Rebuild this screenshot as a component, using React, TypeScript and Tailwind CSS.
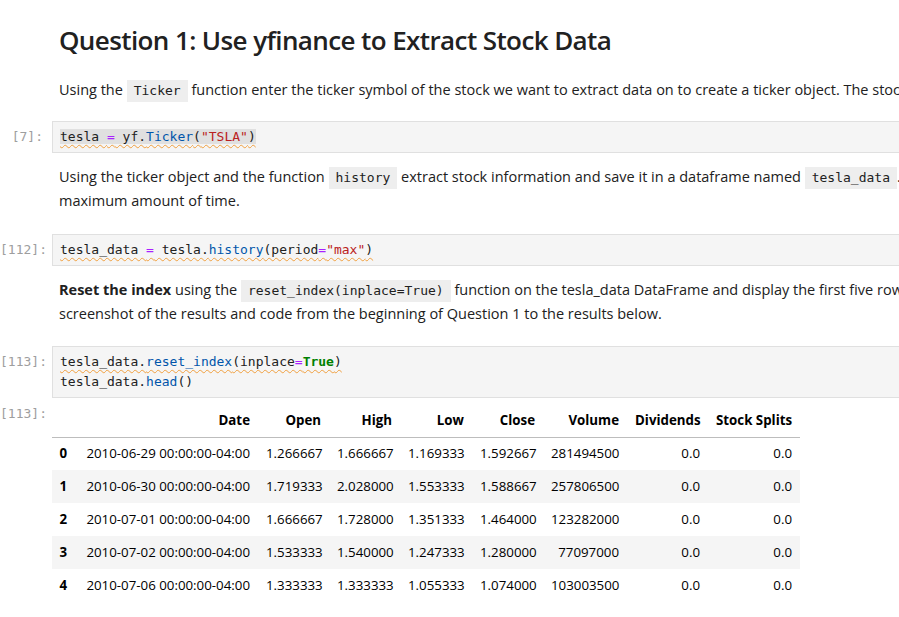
import React from 'react'

const sans = "font-['Segoe_UI','Open_Sans',sans-serif]"
const mono = "font-['DejaVu_Sans_Mono','Liberation_Mono',monospace]"

const ROWS = [
  ['0', '2010-06-29 00:00:00-04:00', '1.266667', '1.666667', '1.169333', '1.592667', '281494500', '0.0', '0.0'],
  ['1', '2010-06-30 00:00:00-04:00', '1.719333', '2.028000', '1.553333', '1.588667', '257806500', '0.0', '0.0'],
  ['2', '2010-07-01 00:00:00-04:00', '1.666667', '1.728000', '1.351333', '1.464000', '123282000', '0.0', '0.0'],
  ['3', '2010-07-02 00:00:00-04:00', '1.533333', '1.540000', '1.247333', '1.280000', '77097000', '0.0', '0.0'],
  ['4', '2010-07-06 00:00:00-04:00', '1.333333', '1.333333', '1.055333', '1.074000', '103003500', '0.0', '0.0'],
]

const HEADERS = ['', 'Date', 'Open', 'High', 'Low', 'Close', 'Volume', 'Dividends', 'Stock Splits']
const WIDTHS = ['w-[23px]', 'w-[183px]', 'w-[71px]', 'w-[71px]', 'w-[72px]', 'w-[71px]', 'w-[84px]', 'w-[81px]', 'w-[92px]']

function Prompt({ n }: { n: string }) {
  return (
    <div className={`w-[52px] shrink-0 pr-[9px] text-right text-[13px] leading-[20px] text-[#9e9e9e] ${mono}`}>
      [{n}]:
    </div>
  )
}

function Code({ children }: { children: React.ReactNode }) {
  return (
    <code
      className={`inline-block bg-[#eeeeee] px-[7px] align-middle text-[13px] leading-[22px] text-[#212121] ${mono}`}
    >
      {children}
    </code>
  )
}

const squiggle = 'underline decoration-wavy decoration-[#f0a040] decoration-1 underline-offset-[3px]'

function CodeCell({ n, children }: { n: string; children: React.ReactNode }) {
  return (
    <div className="flex items-start">
      <div className="pt-[6px]">
        <Prompt n={n} />
      </div>
      <div
        className={`w-[900px] shrink-0 border border-[#e0e0e0] bg-[#f5f5f5] px-[7px] py-[5px] text-[13px] leading-[20px] whitespace-pre text-[#212121] ${mono}`}
      >
        {children}
      </div>
    </div>
  )
}

function Md({ children, pt }: { children: React.ReactNode; pt: string }) {
  return (
    <div className={`flex ${pt}`}>
      <div className="w-[52px] shrink-0" />
      <p className="pl-[7px] text-[14.5px] leading-[24px] whitespace-nowrap">{children}</p>
    </div>
  )
}

export default function App() {
  return (
    <div className={`h-[617px] w-[899px] overflow-hidden bg-white text-[#212121] ${sans}`}>
      <div className="flex w-[1200px] flex-col">
        {/* heading */}
        <div className="flex pt-[23px]">
          <div className="w-[52px] shrink-0" />
          <h1 className="pl-[7px] text-[26px] leading-[34px] font-semibold tracking-[-0.6px] text-[#212121]">
            Question 1: Use yfinance to Extract Stock Data
          </h1>
        </div>

        <Md pt="pt-[21px]">
          Using the <Code>Ticker</Code> function enter the ticker symbol of the stock we want to extract data on to
          create a ticker object. The stock is Tesla and its ticker symbol is TSLA.
        </Md>

        <div className="pt-[19px]">
          <CodeCell n="7">
            <span className={`bg-[#e0e0e0] ${squiggle}`}>
              tesla <span className="text-[#aa22ff]">=</span> yf.<span className="text-[#0055aa]">Ticker</span>(
              <span className="text-[#ba2121]">"TSLA"</span>)
            </span>
          </CodeCell>
        </div>

        <Md pt="pt-[12px]">
          Using the ticker object and the function <Code>history</Code> extract stock information and save it in a
          dataframe named <Code>tesla_data</Code>. Set the <Code>period</Code> parameter to <Code>max</Code> so we get
          information for the
          <br />
          maximum amount of time.
        </Md>

        <div className="pt-[21px]">
          <CodeCell n="112">
            <span className={squiggle}>
              tesla_data <span className="text-[#aa22ff]">=</span> tesla.
              <span className="text-[#0055aa]">history</span>(period<span className="text-[#aa22ff]">=</span>
              <span className="text-[#ba2121]">"max"</span>)
            </span>
          </CodeCell>
        </div>

        <Md pt="pt-[12px]">
          <b className="font-bold">Reset the index</b> using the <Code>reset_index(inplace=True)</Code> function on the
          tesla_data DataFrame and display the first five rows of the tesla_data dataframe using the
          <br />
          screenshot of the results and code from the beginning of Question 1 to the results below.
        </Md>

        <div className="pt-[20px]">
          <CodeCell n="113">
            <span className={squiggle}>
              tesla_data.<span className="text-[#0055aa]">reset_index</span>(inplace
              <span className="text-[#aa22ff]">=</span>
              <span className="font-bold text-[#008000]">True</span>)
            </span>
            {'\n'}tesla_data.<span className="text-[#0055aa]">head</span>()
          </CodeCell>
        </div>

        {/* output */}
        <div className="flex items-start pt-[6px]">
          <Prompt n="113" />
          <table className="w-[748px] table-fixed border-collapse text-[13.3px] text-black">
            <thead>
              <tr className="border-b border-[#bdbdbd]">
                {HEADERS.map((h, i) => (
                  <th
                    key={i}
                    className={`h-[33px] ${WIDTHS[i]} px-[8px] text-right align-middle font-bold whitespace-nowrap`}
                  >
                    {h}
                  </th>
                ))}
              </tr>
            </thead>
            <tbody>
              {ROWS.map((r, i) => (
                <tr key={i} className={i % 2 === 1 ? 'bg-[#f5f5f5]' : ''}>
                  {r.map((c, j) => (
                    <td
                      key={j}
                      className={`h-[33px] px-[8px] text-right align-middle whitespace-nowrap ${j === 0 ? 'pl-[7px] font-bold' : ''}`}
                    >
                      {c}
                    </td>
                  ))}
                </tr>
              ))}
            </tbody>
          </table>
        </div>
      </div>
    </div>
  )
}
